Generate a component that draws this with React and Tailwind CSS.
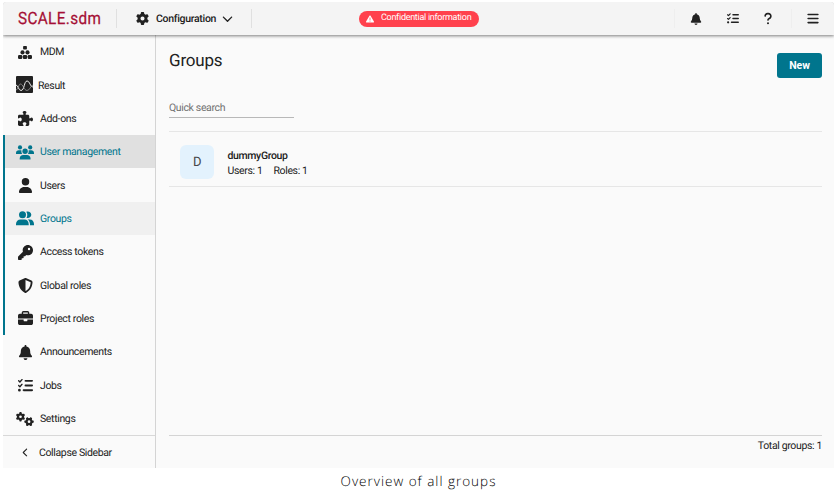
import React from "react";
import {
  FaBars, FaBell, FaBriefcase, FaChevronDown, FaChevronLeft, FaGear, FaGears, FaKey,
  FaListCheck, FaPuzzlePiece, FaQuestion, FaShieldHalved, FaTriangleExclamation, FaUser,
} from "react-icons/fa6";

function MdmIcon() {
  return (
    <svg width="14" height="13" viewBox="0 0 14 13" fill="currentColor">
      <rect x="5.1" y="0" width="3.8" height="3.6" rx="0.8" />
      <circle cx="4.5" cy="6.4" r="2.1" />
      <circle cx="9.5" cy="6.4" r="2.1" />
      <rect x="0" y="9" width="4.300" height="3.9" rx="1.2" />
      <rect x="4.850" y="9" width="4.300" height="3.9" rx="1.2" />
      <rect x="9.700" y="9" width="4.300" height="3.9" rx="1.2" />
    </svg>
  );
}

function ResultIcon() {
  return (
    <svg width="17" height="17" viewBox="0 0 17 17" fill="none">
      <rect width="17" height="17" rx="1" fill="#212121" />
      <path d="M0 9C2 9 2.500 14.500 5 14.500C8.500 14.500 8 5 11 5C14 5 14 11 17 11" stroke="#fff" strokeWidth="0.9" />
      <path d="M0 14C2 14 2.500 8 4.500 8C7 8 8 14.500 11 14.500C14 14.500 14.500 9.500 17 9" stroke="#bbb" strokeWidth="0.6" />
    </svg>
  );
}

function TeamIcon() {
  return (
    <svg width="18" height="15" viewBox="0 0 18 15" fill="currentColor">
      <circle cx="4" cy="2.4" r="2.1" />
      <circle cx="14.2" cy="2.4" r="2.1" />
      <circle cx="9.1" cy="6.3" r="2.7" />
      <path d="M0 9V8C0 6.300 1.200 5.300 2.800 5.300H4.800L5.500 5.500C5.200 6.800 5.500 8 6.300 9Z" />
      <path d="M18 9V8C18 6.300 16.800 5.300 15.200 5.300H13.300L12.600 5.500C12.900 6.800 12.600 8 11.800 9Z" />
      <path d="M3.700 14.500V13.500C3.700 11.300 5.200 10 7.200 10H11C13 10 14.500 11.300 14.500 13.500V14.500Z" />
    </svg>
  );
}

function PairIcon() {
  return (
    <svg width="18" height="15" viewBox="0 0 18 15" fill="currentColor">
      <circle cx="6.500" cy="3.700" r="3.500" />
      <path d="M0 14.300V13C0 10.300 2 8.500 4.500 8.500H8.500C11 8.500 12.700 10.300 12.700 13V14.300Z" />
      <path d="M10.300 0.700C13 -0.100 15.300 1.500 15.300 3.800C15.300 6.100 13 7.600 10.500 6.900C11.600 5 11.500 2.400 10.300 0.700Z" />
      <path d="M11.700 8.500H13.800C16.300 8.500 18 10.400 18 13V14.300H14C14.100 11.900 13.400 9.800 11.700 8.500Z" />
    </svg>
  );
}

const items = [
  { label: "MDM", icon: <MdmIcon /> },
  { label: "Result", icon: <ResultIcon />, wide: true },
  { label: "Add-ons", icon: <FaPuzzlePiece size={15} /> },
  { label: "User management", icon: <TeamIcon />, group: true, tone: "bg-[#e0e0e0] text-[#00758d]" },
  { label: "Users", icon: <FaUser size={15} />, group: true },
  { label: "Groups", icon: <PairIcon />, group: true, tone: "bg-[#f0f0f0] text-[#00758d]" },
  { label: "Access tokens", icon: <FaKey size={15} />, group: true },
  { label: "Global roles", icon: <FaShieldHalved size={15} />, group: true },
  { label: "Project roles", icon: <FaBriefcase size={15} />, group: true },
  { label: "Announcements", icon: <FaBell size={15} /> },
  { label: "Jobs", icon: <FaListCheck size={15} /> },
  { label: "Settings", icon: <FaGears size={18} /> },
];

function SideItem({ label, icon, wide, group, tone = "" }) {
  return (
    <div className={`flex h-[33.33px] items-center border-l-2 pt-px ${group ? "border-[#00758d]" : "border-transparent"} ${tone}`}>
      <span className={`flex w-[40px] shrink-0 justify-center ${wide ? "-ml-px mb-px" : ""}`}>{icon}</span>
      <span className={wide ? "-ml-[6px]" : "-ml-[5px]"}>{label}</span>
    </div>
  );
}

export default function App() {
  return (
    <div className="h-[497px] w-[840px] overflow-hidden bg-white pl-[3px] pt-[2px] font-['Roboto',sans-serif] text-[10.5px] tracking-[-0.36px] text-[#212121] [text-rendering:geometricPrecision]">
      <div className="flex h-[466px] w-[831px] flex-col overflow-hidden rounded-t-[3px] bg-[#fafafa]">
        <header className="z-10 flex h-[33px] shrink-0 items-center bg-[#f4f4f4] shadow-[0_1px_3px_rgba(0,0,0,0.5)]">
          <div className="w-[113px] pl-[15px] pt-px text-[17px] leading-[33px] tracking-[0.4px] text-[#a50f35]">
            <span className="inline-block origin-left scale-x-[0.9] [-webkit-text-stroke:0.25px_#a50f35]">SCALE.sdm</span>
          </div>
          <div className="flex h-[19px] w-[136px] items-center border-x border-[#e0e0e0] pl-[19px] font-medium">
            <FaGear size={13} />
            <span className="ml-[7px] w-[60px] whitespace-nowrap tracking-[-0.3px]">Configuration</span>
            <FaChevronDown size={11} className="ml-[6px]" />
          </div>
          <div className="ml-[107px] flex h-4 w-[120px] items-center rounded-full bg-[#ff414d] pl-[7px] text-[9px] tracking-[-0.28px] text-white">
            <FaTriangleExclamation size={8} />
            <span className="ml-[7px] whitespace-nowrap pt-px">Confidential information</span>
          </div>
          <div className="ml-auto flex h-[19px] items-center">
            <div className="flex h-full w-[118px] items-center border-x border-[#eeeeee]">
              <span className="ml-[15px] flex w-3 justify-center"><FaBell size={12} /></span>
              <span className="ml-[25px] flex w-3 justify-center"><FaListCheck size={13} /></span>
              <span className="ml-[23px] flex w-3 justify-center"><FaQuestion size={13} /></span>
            </div>
            <span className="ml-[15px] mr-[15px] flex w-3 justify-center"><FaBars size={13} /></span>
          </div>
        </header>
        <div className="flex min-h-0 flex-1">
          <nav className="flex w-[153px] shrink-0 flex-col border-r border-[#d4d4d4]">
            {items.map((item) => <SideItem key={item.label} {...item} />)}
            <div className="flex flex-1 items-center border-t border-[#d8d8d8] pt-[2px]">
              <FaChevronLeft size={9} className="ml-[18px]" />
              <span className="ml-[9px]">Collapse Sidebar</span>
            </div>
          </nav>
          <main className="flex flex-1 flex-col pl-[13px] pr-[12px]">
            <div className="flex h-[57px] items-start justify-between">
              <h1 className="pt-[14px] text-[17px] leading-6 tracking-[-0.2px]">Groups</h1>
              <button className="mt-[18px] h-[25px] w-[45px] rounded-[3px] bg-[#00758d] font-bold tracking-[-0.1px] text-white">New</button>
            </div>
            <div className="mt-[6px] h-[20px] w-[125px] border-b border-[#b8b8b8] leading-[19px] text-[#707070]">Quick search</div>
            <div className="mt-[13px] flex h-[56px] items-center border-y border-[#e6e6e6] pl-[11px] pt-[6px]">
              <div className="flex size-[34px] items-center justify-center rounded-[6px] bg-[#e3f2fd] pt-[2px] text-[13px] text-[#484848]">D</div>
              <div className="ml-[13.5px] pt-[2px] leading-[15px]">
                <div className="font-medium">dummyGroup</div>
                <div className="flex gap-[11px]"><span>Users: 1</span><span>Roles: 1</span></div>
              </div>
            </div>
            <div className="mt-auto h-[33px] border-t border-[#d4d4d4] text-right leading-[20px]">Total groups: 1</div>
          </main>
        </div>
      </div>
      <p className="w-[831px] text-center font-['Open_Sans',sans-serif] text-[13.5px] font-light leading-[26px] tracking-[1px] text-black">Overview of all groups</p>
    </div>
  );
}
